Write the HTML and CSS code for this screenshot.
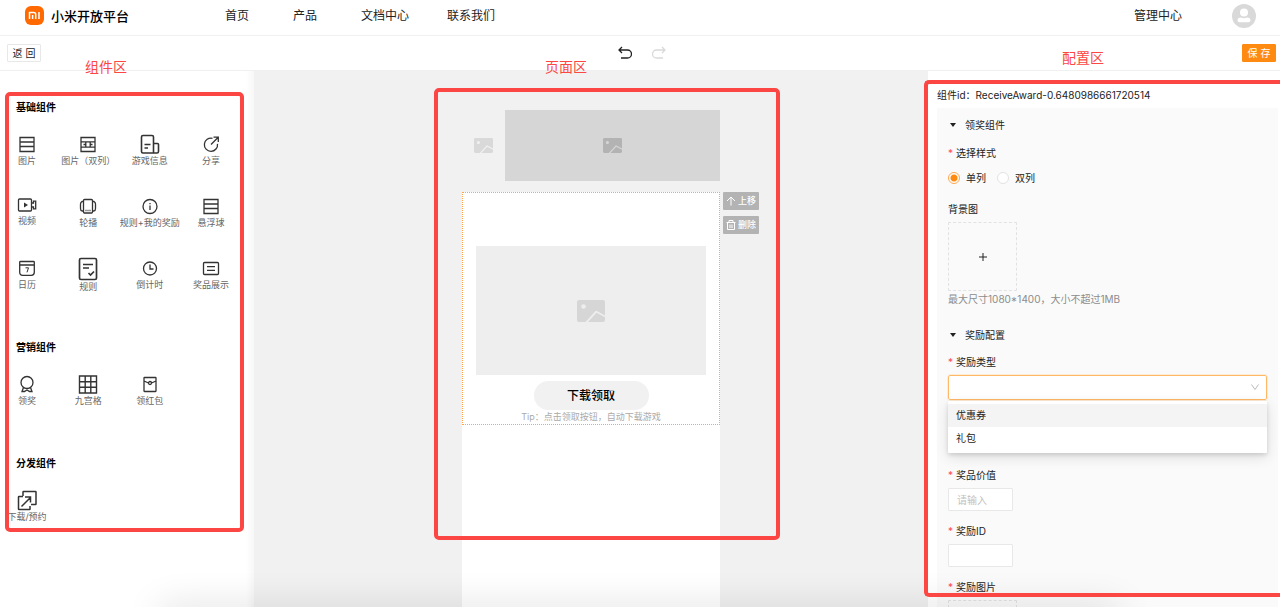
FILE: index.html
```html
<!DOCTYPE html>
<html lang="zh-CN">
<head>
<meta charset="utf-8">
<title>小米开放平台</title>
<link rel="stylesheet" href="styles.css">
</head>
<body>
<svg class="sprite" aria-hidden="true">
  <symbol id="picture" viewBox="0 0 28 22">
    <path fill-rule="evenodd" d="M2 0h24a2 2 0 0 1 2 2v13.500L19 10.500 8.500 22H2a2 2 0 0 1-2-2V2a2 2 0 0 1 2-2zM6.500 4.200a2.300 2.300 0 1 0 0 4.600a2.300 2.300 0 0 0 0-4.600z"/>
    <path d="M11 22l8.500-9.300L28 17.200V20a2 2 0 0 1-2 2z"/>
  </symbol>
  <symbol id="rows" viewBox="0 0 22 22"><path d="M4 4.500h14v14H4zM4 9h14M4 13.500h14"/></symbol>
</svg>

<header class="header">
  <a class="brand" href="#">
    <svg class="logo" viewBox="0 0 19 19" aria-hidden="true">
      <rect width="19" height="19" rx="6" fill="#ff6900"/>
      <path d="M4.500 13V6.500h4.200q2 0 2 2V13M7.600 9v4M14 6v7" fill="none" stroke="#fff" stroke-width="1.500"/>
    </svg>
    <span>小米开放平台</span>
  </a>
  <nav class="nav">
    <a href="#">首页</a>
    <a href="#">产品</a>
    <a href="#">文档中心</a>
    <a href="#">联系我们</a>
  </nav>
  <a class="manage" href="#">管理中心</a>
  <svg class="avatar" viewBox="0 0 24 24" role="img" aria-label="用户">
    <circle cx="12" cy="12" r="12" fill="#d9d9d9"/>
    <circle cx="12" cy="8.500" r="4" fill="#fff"/>
    <path d="M5.500 16.500q0-3 3.500-3 3 1.500 6 0 3.500 0 3.500 3 0 1.700-2 1.700h-9q-2 0-2-1.700z" fill="#fff"/>
  </svg>
</header>

<div class="toolbar">
  <button class="btn" type="button">返 回</button>
  <div class="history">
    <button class="icon-btn" type="button" aria-label="撤销">
      <svg viewBox="0 0 14 14"><path d="M4 1L1 4l3 3M1.500 4H9.500a4 4 0 0 1 0 8H3"/></svg>
    </button>
    <button class="icon-btn icon-btn-off" type="button" aria-label="重做" disabled>
      <svg viewBox="0 0 14 14"><path d="M10 1l3 3-3 3M12.500 4H4.500a4 4 0 0 0 0 8H11"/></svg>
    </button>
  </div>
  <button class="btn btn-primary" type="button">保 存</button>
</div>

<main class="workspace">
  <aside class="components">
    <section class="group">
      <h2>基础组件</h2>
      <ul class="tiles">
        <li><svg viewBox="0 0 22 22"><use href="#rows"/></svg><span>图片</span></li>
        <li><svg viewBox="0 0 22 22"><path d="M4 4.500h14v14H4zM4 8.800h14M4 14.200h14M4 8.800h4.800v5.400M18 8.800h-4.800v5.400M8.800 11.500H6.500M13.200 11.500h2.300"/></svg><span>图片（双列）</span></li>
        <li><svg viewBox="0 0 22 22"><path stroke-width="1.600" d="M14.500 20H4q-1.500 0-1.500-1.500V4Q2.500 2.500 4 2.500h9q1.500 0 1.500 1.500v16H18q1.500 0 1.500-1.500V11.500q0-1-1-1h-4M5.500 11.500h6M5.500 15h3.500"/></svg><span>游戏信息</span></li>
        <li><svg viewBox="0 0 22 22"><path d="M12.500 5.300a6.600 6.600 0 1 0 5 5.500M11 11.500l7-7M13.500 4.200h4.800V9"/></svg><span>分享</span></li>
        <li><svg class="short" viewBox="0 0 22 20"><path d="M3.500 4h11q1 0 1 1v10q0 1-1 1h-11q-1 0-1-1V5q0-1 1-1zM15.500 8h2V6.200h2.200v7.600h-2.200V12h-2"/><path fill="#333" d="M8 7.500l4 2.500-4 2.500z" stroke="none"/></svg><span>视频</span></li>
        <li><svg viewBox="0 0 22 22"><path d="M7.500 4.500h7q1 0 1 1v11.500q0 1-1 1h-7q-1 0-1-1V5.500q0-1 1-1zM6.500 6.500H5Q3.500 7.500 3.500 9v4.500q0 2 1.500 2.500h1.500M15.500 6.500H17q1.500 1 1.500 2.500v4.500q0 2-1.500 2.500h-1.500"/><path stroke-dasharray="1 1" d="M8.500 15.500h5"/></svg><span>轮播</span></li>
        <li><svg viewBox="0 0 22 22"><circle cx="11" cy="11.500" r="7"/><path d="M11 10.500v4.500M11 8v1.200"/></svg><span>规则+我的奖励</span></li>
        <li><svg viewBox="0 0 22 22"><use href="#rows"/></svg><span>悬浮球</span></li>
        <li><svg viewBox="0 0 22 22"><path d="M4.500 4.500h13q.8 0 .8.800v10q0 3-3 3h-8.600q-3 0-3-3v-10q0-.8.800-.8zM3.700 8h14.600"/><path stroke-width="1" d="M9.500 10.800h3l-1.500 4.500"/></svg><span>日历</span></li>
        <li><svg class="tall" viewBox="0 0 22 24"><path stroke-width="1.700" d="M4 1.500h14q1.500 0 1.500 1.500v18q0 1.500-1.500 1.500H4q-1.500 0-1.500-1.500V3Q2.500 1.500 4 1.500zM6 7.500h10M6 11h6M11.500 16l2 2 3.500-3.500"/></svg><span>规则</span></li>
        <li><svg viewBox="0 0 22 22"><circle cx="11" cy="11.500" r="6.500"/><path d="M11 7.500v4.500h3.500"/></svg><span>倒计时</span></li>
        <li><svg viewBox="0 0 22 22"><path d="M4.500 5.500h13q1 0 1 1v10q0 1-1 1h-13q-1 0-1-1v-10q0-1 1-1zM7 9.700h8M7 13.300h8"/></svg><span>奖品展示</span></li>
      </ul>
    </section>
    <section class="group">
      <h2>营销组件</h2>
      <ul class="tiles">
        <li><svg viewBox="0 0 22 22"><circle cx="11" cy="9.500" r="6"/><path d="M7.500 14.500L6 18.500h2.500l2.500-1.500 2.500 1.500H16l-1.500-4"/></svg><span>领奖</span></li>
        <li><svg viewBox="0 0 22 22"><path stroke-width="1.400" d="M2.500 3h17v17h-17zM8.200 3v17M13.800 3v17M2.500 8.700h17M2.500 14.300h17"/></svg><span>九宫格</span></li>
        <li><svg viewBox="0 0 22 22"><path d="M5.500 4.500h11q.5 0 .5.500v13q0 .5-.5.500h-11q-.5 0-.5-.5V5q0-.5.500-.5zM5 8l4.500 2M17 8l-4.500 2"/><circle cx="11" cy="10" r="1.500"/></svg><span>领红包</span></li>
      </ul>
    </section>
    <section class="group">
      <h2>分发组件</h2>
      <ul class="tiles">
        <li><svg viewBox="0 0 22 22"><path stroke-width="1.500" d="M7 7V3q0-.5.5-.5h12q.5 0 .5.500v12q0 .5-.5.500h-4.500M7 7.500H3q-.5 0-.5.500v12q0 .5.500.500h10.500q.5 0 .5-.5v-3M5.500 17.500l9-9M9 8h5.500v5.500"/></svg><span>下载/预约</span></li>
      </ul>
    </section>
  </aside>

  <section class="stage">
    <div class="phone">
      <div class="banner">
        <div class="banner-side"><svg class="pic pic-light"><use href="#picture"/></svg></div>
        <div class="banner-main"><svg class="pic pic-dark"><use href="#picture"/></svg></div>
      </div>
      <div class="page">
        <div class="award">
          <div class="award-image"><svg class="pic pic-large"><use href="#picture"/></svg></div>
          <button class="award-button" type="button">下载领取</button>
          <p class="award-tip">Tip：点击领取按钮，自动下载游戏</p>
          <div class="actions">
            <button type="button"><svg viewBox="0 0 10 10"><path d="M5 9.500V1M1 5l4-4 4 4"/></svg>上移</button>
            <button type="button"><svg viewBox="0 0 10 10"><path d="M.5 2.500h9M3 2.500v-2h4v2M1.500 2.500v7h7v-7M4 4.500v3.500M6 4.500v3.500"/></svg>删除</button>
          </div>
        </div>
      </div>
    </div>
  </section>

  <aside class="config">
    <p class="config-id">组件id：ReceiveAward-0.6480986661720514</p>
    <form class="form">
      <h3 class="fold">领奖组件</h3>
      <fieldset class="field styles">
        <legend class="required">选择样式</legend>
        <div class="radios">
          <label><input type="radio" name="style" checked>单列</label>
          <label><input type="radio" name="style">双列</label>
        </div>
      </fieldset>
      <div class="field">
        <span class="label">背景图</span>
        <button class="upload" type="button" aria-label="上传背景图"><svg viewBox="0 0 10 10"><path d="M5 1v8M1 5h8"/></svg></button>
        <p class="help">最大尺寸1080*1400，大小不超过1MB</p>
      </div>
      <h3 class="fold fold-next">奖励配置</h3>
      <div class="field field-type">
        <label class="required" for="type">奖励类型</label>
        <div class="select">
          <select id="type">
            <option selected></option>
            <option>优惠券</option>
            <option>礼包</option>
          </select>
          <svg class="chevron" viewBox="0 0 8 8"><path d="M.5 1.500L4 6.500l3.500-5"/></svg>
          <ul class="menu" role="listbox">
            <li class="active" role="option">优惠券</li>
            <li role="option">礼包</li>
          </ul>
        </div>
      </div>
      <div class="field">
        <label class="required" for="value">奖品价值</label>
        <input class="text" id="value" type="text" placeholder="请输入">
      </div>
      <div class="field">
        <label class="required" for="award-id">奖励ID</label>
        <input class="text" id="award-id" type="text">
      </div>
      <div class="field">
        <span class="label required">奖励图片</span>
        <button class="upload" type="button" aria-label="上传奖励图片"></button>
      </div>
    </form>
  </aside>
</main>

<div class="shade"></div>
<div class="mark mark-components"><span>组件区</span></div>
<div class="mark mark-page"><span>页面区</span></div>
<div class="mark mark-config"><span>配置区</span></div>
</body>
</html>
```

FILE: styles.css
```css
* {
  box-sizing: border-box;
}

body {
  position: relative;
  display: flex;
  flex-direction: column;
  height: 100vh;
  margin: 0;
  overflow: hidden;
  background: #fff;
  color: #222;
  font: 10px/16px Inter, "Noto Sans CJK SC", sans-serif;
}

h2, h3, p, ul, fieldset, legend {
  margin: 0;
  padding: 0;
  border: 0;
}

ul {
  list-style: none;
}

a {
  color: inherit;
  text-decoration: none;
}

button, input, select {
  font: inherit;
  color: inherit;
}

button {
  padding: 0;
  cursor: pointer;
}

svg {
  display: block;
}

.sprite {
  position: absolute;
  width: 0;
  height: 0;
}

/* Header */
.header {
  display: flex;
  flex: none;
  align-items: center;
  height: 36px;
  padding: 0 24px 4px 25px;
  border-bottom: 1px solid #f0f0f0;
  font-size: 12px;
}

.brand {
  display: flex;
  align-items: center;
  gap: 7px;
  width: 200px;
  color: #000;
  font-size: 13px;
  font-weight: 500;
}

.logo {
  width: 19px;
  height: 19px;
}

.nav {
  display: grid;
  grid-template-columns: 68px 68px 86px auto;
}

.manage {
  margin-left: auto;
}

.avatar {
  width: 24px;
  height: 24px;
  margin-left: 50px;
}

/* Toolbar */
.toolbar {
  display: flex;
  flex: none;
  align-items: center;
  justify-content: space-between;
  height: 35px;
  padding: 0 4px 0 7px;
  border-bottom: 1px solid #f0f0f0;
}

.btn {
  width: 34px;
  height: 18px;
  border: 1px solid #e8e8e8;
  border-radius: 1px;
  background: #fff;
  line-height: 16px;
}

.btn-primary {
  border-color: #ff8a12;
  background: #ff8a12;
  color: #fff;
}

.history {
  display: flex;
  gap: 20px;
}

.icon-btn {
  border: 0;
  background: none;
  color: #222;
}

.icon-btn-off {
  color: #d9d9d9;
}

.icon-btn svg {
  width: 14px;
  height: 14px;
  fill: none;
  stroke: currentColor;
  stroke-width: 1.3;
}

.workspace {
  display: flex;
  flex: 1;
  min-height: 0;
}

/* Component library */
.components {
  flex: 0 0 254px;
  padding: 28px 32px 0 16px;
  background: linear-gradient(to left, #f7f7f7, #fff 8px);
}

.group + .group {
  margin-top: 50px;
}

.group h2 {
  margin-bottom: 18px;
  color: #000;
  font-size: 10px;
  font-weight: 700;
}

.tiles {
  display: grid;
  grid-template-columns: repeat(4, 22px);
  grid-auto-rows: 32px;
  row-gap: 30px;
  justify-content: space-between;
}

.tiles li {
  display: flex;
  flex-direction: column;
  gap: 1px;
  align-items: center;
  color: #666;
  font-size: 9px;
  line-height: 10px;
  white-space: nowrap;
}

.tiles svg {
  flex: none;
  width: 22px;
  height: 22px;
  fill: none;
  stroke: #333;
  stroke-width: 1.3;
}

.tiles .short {
  height: 20px;
}

.tiles .tall {
  height: 24px;
}

/* Page preview */
.stage {
  display: flex;
  flex: 1;
  justify-content: center;
  background: #f1f1f1;
}

.phone {
  display: flex;
  flex-direction: column;
  width: 258px;
  padding-top: 39px;
}

.banner {
  display: flex;
  height: 71px;
  margin-bottom: 11px;
}

.banner-side {
  display: grid;
  flex: 0 0 43px;
  place-items: center;
}

.banner-main {
  display: grid;
  flex: 1;
  place-items: center;
  background: #d6d6d6;
}

.pic {
  width: 19px;
  height: 15px;
}

.pic-light {
  fill: #d9d9d9;
}

.pic-dark {
  fill: #b3b3b3;
}

.pic-large {
  width: 28px;
  height: 22px;
  fill: #d6d6d6;
}

.page {
  flex: 1;
  background: #fff;
}

.award {
  position: relative;
  display: flex;
  flex-direction: column;
  align-items: center;
  padding: 53px 13px 0;
  border: 1px dotted #ffa64d;
}

.award-image {
  display: grid;
  place-items: center;
  width: 100%;
  height: 129px;
  margin-bottom: 6px;
  background: #eee;
}

.award-button {
  width: 115px;
  height: 29px;
  border: 0;
  border-radius: 15px;
  background: #f1f1f1;
  color: #000;
  font-size: 12px;
  font-weight: 500;
}

.award-tip {
  color: #aaa;
  font-size: 9px;
  line-height: 14px;
}

.actions {
  position: absolute;
  top: -1px;
  left: 100%;
  display: grid;
  gap: 6px;
  margin-left: 4px;
}

.actions button {
  display: flex;
  gap: 2px;
  align-items: center;
  justify-content: center;
  width: 36px;
  height: 18px;
  border: 0;
  border-radius: 1px;
  background: #b3b3b3;
  color: #fff;
  font-size: 9px;
  font-weight: 500;
  white-space: nowrap;
}

.actions svg {
  flex: none;
  width: 10px;
  height: 10px;
  fill: none;
  stroke: #fff;
}

/* Configuration */
.config {
  flex: 0 0 352px;
  min-height: 0;
  padding: 16px 2px 0 9px;
  overflow: hidden;
}

.config-id {
  margin-bottom: 5px;
}

.form {
  padding: 9px 11px;
  background: #fafafa;
}

.fold {
  display: flex;
  align-items: center;
  gap: 9px;
  margin-bottom: 12px;
  padding-left: 2px;
  font-size: 10px;
  font-weight: 400;
}

.fold::before {
  border: 3px solid transparent;
  border-top: 4px solid #222;
  border-bottom: 0;
  content: "";
}

.fold-next {
  margin-top: 20px;
  margin-bottom: 11px;
}

.field {
  margin-bottom: 12px;
}

.field > label, .label {
  display: block;
  margin-bottom: 5px;
}

.required::before {
  margin-right: 3px;
  color: #ff4d4f;
  content: "*";
}

.styles {
  margin-bottom: 15px;
}

.radios {
  display: flex;
  gap: 11px;
  margin-top: 9px;
}

.radios label {
  display: flex;
  align-items: center;
  gap: 6px;
}

.radios input {
  width: 12px;
  height: 12px;
  margin: 0;
  border: 1px solid #e2e2e2;
  border-radius: 50%;
  appearance: none;
  background: #fff;
}

.radios input:checked {
  border-color: #ffa64d;
  background: radial-gradient(circle, #ff8a12 3px, #fff 4px);
}

.upload {
  display: grid;
  place-items: center;
  width: 69px;
  height: 69px;
  border: 1px dashed #e2e2e2;
  border-radius: 1px;
  background: #fafafa;
}

.upload svg {
  width: 10px;
  height: 10px;
  fill: none;
  stroke: #222;
}

.help {
  color: #8c8c8c;
}

.field-type {
  margin-bottom: 67px;
}

.select {
  position: relative;
}

.select select {
  display: block;
  width: 100%;
  height: 25px;
  padding: 0 8px;
  border: 1px solid #ffb866;
  border-radius: 2px;
  outline: 1px solid #ffecd6;
  appearance: none;
  background: #fff;
}

.chevron {
  position: absolute;
  top: 8px;
  right: 8px;
  width: 8px;
  height: 8px;
  fill: none;
  stroke: #bbb;
}

.menu {
  position: absolute;
  top: 100%;
  right: 0;
  left: 0;
  z-index: 1;
  margin-top: 1px;
  padding: 3px 0;
  border-radius: 1px;
  background: #fff;
  box-shadow: 0 2px 4px #0000001f, 0 4px 14px #0000001f;
}

.menu li {
  padding: 3px 8px 4px;
}

.menu .active {
  background: #f4f4f4;
}

.text {
  display: block;
  width: 65px;
  height: 23px;
  padding: 0 8px;
  border: 1px solid #e8e8e8;
  border-radius: 1px;
  background: #fff;
}

.text::placeholder {
  color: #bfbfbf;
}

/* Soft shadow rising from the bottom edge of the window */
.shade {
  position: absolute;
  right: 160px;
  bottom: -20px;
  left: 160px;
  height: 20px;
  box-shadow: 0 0 36px #00000026;
  pointer-events: none;
}

/* Red callouts laid over the three working areas */
.mark {
  position: absolute;
  border: 4px solid #fc4643;
  border-radius: 5px;
  color: #fc4643;
  font-size: 14px;
  line-height: 18px;
  pointer-events: none;
}

.mark span {
  position: absolute;
  bottom: 100%;
  margin-bottom: 20px;
  white-space: nowrap;
}

.mark-components {
  top: 92px;
  left: 5px;
  width: 239px;
  height: 440px;
}

.mark-components span {
  left: 76px;
}

.mark-page {
  top: 88px;
  left: calc(50% - 206px);
  width: 346px;
  height: 452px;
}

.mark-page span {
  left: 107px;
  margin-bottom: 16px;
}

.mark-config {
  top: 80px;
  right: 0;
  width: 356px;
  height: 517px;
  border-right: 0;
  border-radius: 5px 0 0 5px;
}

.mark-config span {
  left: 134px;
  margin-bottom: 17px;
}
```
